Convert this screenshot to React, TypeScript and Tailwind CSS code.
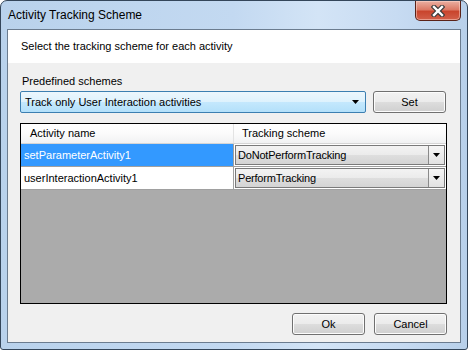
import React from "react";

const font = "font-['Liberation_Sans',Arial,sans-serif]";

function Arrow() {
  return (
    <svg width="7" height="4" viewBox="0 0 7 4">
      <path d="M0 0H7L3.5 4Z" fill="#000" />
    </svg>
  );
}

function Button({ label }: { label: string }) {
  return (
    <button className="w-[73px] h-[22px] rounded-[3px] border border-[#707070] bg-[linear-gradient(#f2f2f2_0%,#ebebeb_50%,#dddddd_51%,#cfcfcf_100%)] shadow-[inset_0_0_0_1px_#fcfcfc] text-[11px] text-black flex items-center justify-center">
      {label}
    </button>
  );
}

function CellCombo({ value }: { value: string }) {
  return (
    <div className="flex-1 h-full flex border border-[#7a7a7a] bg-[linear-gradient(#f3f3f3_0%,#ebebeb_50%,#dedede_51%,#d4d4d4_100%)]">
      <div className="flex-1 flex items-center pl-[2px] text-[11px] text-black tracking-[-0.2px]">{value}</div>
      <div className="w-[16px] border-l border-[#8a8a8a] bg-[linear-gradient(#f6f6f6,#e2e2e2)] flex items-center justify-center">
        <Arrow />
      </div>
    </div>
  );
}

function CloseButton() {
  return (
    <div className="w-[46px] h-[20px] rounded-b-[5px] border border-t-0 border-[#5a2218] bg-[linear-gradient(#eab0a2_0%,#dc7a66_45%,#c9452d_55%,#d2604a_100%)] shadow-[inset_0_0_0_1px_rgba(255,220,210,0.5)] flex items-center justify-center">
      <svg width="14" height="12" viewBox="0 0 14 12">
        <path d="M3 2L11 10M11 2L3 10" stroke="#3b3b3b" strokeWidth="4.6" strokeLinecap="square" />
        <path d="M3 2L11 10M11 2L3 10" stroke="#ffffff" strokeWidth="2.4" strokeLinecap="square" />
      </svg>
    </div>
  );
}

export default function App() {
  return (
    <div className={`${font} w-[468px] h-[350px] flex flex-col rounded-t-[7px] rounded-b-[3px] border border-[#34465a] bg-[linear-gradient(90deg,#b9d2ec_0%,#c3d9f1_50%,#d3e4f6_68%,#c7dbf2_85%,#b8d0ea_100%)]`}>
      {/* title bar */}
      <div className="h-[28px] flex items-start shrink-0">
        <div className="pl-[7px] pt-[7px] text-[12px] leading-[15px] text-black">Activity Tracking Scheme</div>
        <div className="flex-1" />
        <div className="mr-[6px]">
          <CloseButton />
        </div>
      </div>

      {/* client area */}
      <div className="flex-1 mx-[6px] mb-[6px] border border-[#6b7c8f] bg-[#f0f0f0] flex flex-col text-[11px] leading-[13px] text-black">
        <div className="h-[33px] bg-white pl-[13px] pt-[10px]">Select the tracking scheme for each activity</div>

        <div className="pl-[14px] mt-[12px]">Predefined schemes</div>

        <div className="flex mt-[3px] ml-[12px] gap-[7px]">
          <div className="w-[346px] h-[22px] rounded-[2px] border border-[#3c7fb1] bg-[linear-gradient(#ecf7fd_0%,#ddf2fd_50%,#c4e8fd_51%,#b3e0fa_100%)] flex items-center">
            <div className="flex-1 pl-[4px]">Track only User Interaction activities</div>
            <div className="pr-[6px] flex items-center">
              <Arrow />
            </div>
          </div>
          <Button label="Set" />
        </div>

        {/* grid */}
        <div className="mt-[10px] ml-[12px] w-[427px] h-[181px] border border-black bg-[#ababab] flex flex-col">
          <div className="h-[20px] flex bg-[linear-gradient(#ffffff_0%,#fbfbfb_50%,#f1f2f3_100%)] border-b border-[#d5d5d5]">
            <div className="w-[213px] border-r border-[#e3e3e3] pl-[9px] flex items-center">Activity name</div>
            <div className="flex-1 pl-[8px] flex items-center">Tracking scheme</div>
          </div>
          {[
            { name: "setParameterActivity1", scheme: "DoNotPerformTracking", sel: true },
            { name: "userInteractionActivity1", scheme: "PerformTracking", sel: false },
          ].map((r) => (
            <div key={r.name} className="h-[23px] flex border-b border-[#a0a0a0] bg-white">
              <div
                className={`w-[213px] border-r border-[#a0a0a0] pl-[3px] flex items-center ${
                  r.sel ? "bg-[#3399ff] text-white" : "bg-white text-black"
                }`}
              >
                {r.name}
              </div>
              <div className="flex-1 flex p-[1px]">
                <CellCombo value={r.scheme} />
              </div>
            </div>
          ))}
        </div>

        <div className="flex justify-end gap-[9px] mt-[9px] mr-[13px]">
          <Button label="Ok" />
          <Button label="Cancel" />
        </div>
      </div>
    </div>
  );
}
